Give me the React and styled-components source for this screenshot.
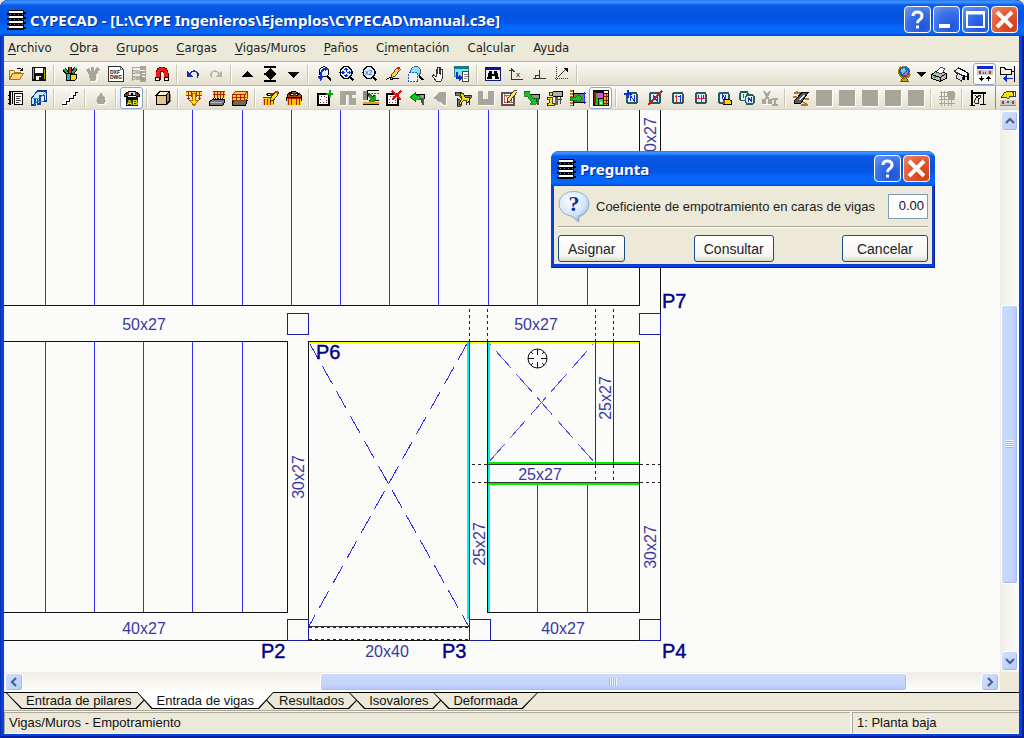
import React, { useState } from "react";
import styled, { createGlobalStyle, css } from "styled-components";

const GlobalStyle = createGlobalStyle`
    *, *::before, *::after { box-sizing: border-box; }
    body {
        margin: 0;
        background: #ece9d8;
        font-family: "Liberation Sans", Arial, sans-serif;
        font-size: 13px;
        color: #111;
    }
    button, input { font-family: inherit; color: inherit; }
`

const Ventana = styled.div`
    min-height: 100vh;
    display: flex;
    flex-direction: column;
    padding: 0 5px 4px 4px;
    background: #0443dc;
    border-radius: 8px 8px 0 0;
    box-shadow: inset 1px 0 #0a2bb8, inset -2px 0 #0a1f9c, inset 0 -2px #0a1f9c;
    overflow: hidden;
`
const barraAzul = css`
    background: linear-gradient(#2a78f0 0, #3f97ff 2px, #0a5cea 5px, #0453e0 14px, #0456e6 60%, #0566fb 74%, #0566fa 92%, #0347c8 100%);
`
const BarraTitulo = styled.header`
    ${barraAzul}
    display: flex;
    align-items: center;
    gap: 4px;
    height: ${p => p.$dialogo ? "35px" : "36px"};
    margin: ${p => p.$dialogo ? "0 -3px" : "0 -5px 0 -4px"};
    padding: ${p => p.$dialogo ? "0 5px 0 5px" : "3px 6px 0 6px"};
    border-radius: 8px 8px 0 0;
`
const Titulo = styled.h1`
    flex: 1;
    margin: 0;
    font: bold 15px/20px "Noto Sans", "Open Sans", sans-serif;
    color: #fff;
    text-shadow: 1px 1px #0a2b9a;
    white-space: nowrap;
`
const BotonesVentana = styled.div`
    display: flex;
    gap: 2px;
`
const BotonVentana = styled.button`
    width: 27px;
    height: 27px;
    padding: 0;
    border: 1px solid #fff;
    border-radius: 4px;
    background: ${p => p.$cerrar
        ? "radial-gradient(circle at 80% 80%, #d43e14, #e4552c 50%, #ee8a68)"
        : "radial-gradient(circle at 70% 80%, #1d55de, #3a6fe8 55%, #6f9bf5)"};
    svg { display: block; }
`

const Menu = styled.nav`
    display: flex;
    height: 25px;
    align-items: center;
    background: #ece9d8;
    padding: 0 0 2px 4px;
    gap: 18px;
`
const MenuItem = styled.a`
    font: 13px/20px "DejaVu Sans Condensed", "DejaVu Sans", sans-serif;
    color: #222;
    text-decoration: none;
    u { text-underline-offset: 2px; }
`

const BarraIconos = styled.div`
    display: flex;
    justify-content: space-between;
    height: 24px;
    border-top: 1px solid #b9b5a4;
    background: linear-gradient(#fbfaf6, #f1efe4 40%, #e4e0d0);
    overflow: hidden;
`
const Grupo = styled.div`
    display: flex;
    align-items: center;
    flex: ${p => p.$fijo ? "none" : "0 1 auto"};
    overflow: hidden;
    border-left: ${p => p.$borde ? "1px solid #8f8c80" : "0"};
`
const Glifo = styled.svg`
    display: block;
    flex: none;
    width: 18px;
    height: 18px;
`
const Herramienta = styled.button`
    display: flex;
    align-items: center;
    justify-content: center;
    flex: none;
    width: ${p => p.$estrecho ? "12px" : "23px"};
    height: 22px;
    padding: 0;
    border: 1px solid ${p => p.$activo ? "#8ea6c4" : "transparent"};
    border-radius: 3px;
    background: ${p => p.$activo ? "#fdfdfb" : "none"};
`
const Separador = styled.span`
    flex: none;
    width: 8px;
    height: 18px;
    background: linear-gradient(90deg, transparent 3px, #c9c5b4 3px, #c9c5b4 4px, #fff 4px, #fff 5px, transparent 5px);
`

const Trabajo = styled.main`
    flex: 1;
    position: relative;
    display: grid;
    grid-template: minmax(0, 1fr) 20px / minmax(0, 1fr) 19px;
    background: #ece9d8;
    border-top: 1px solid #d8d4c4;
`
const Lienzo = styled.svg`
    width: 100%;
    height: 100%;
    min-height: 561px;
    background: #fbfbf9;
    display: block;
    font-family: "Liberation Sans", Arial, sans-serif;
`
const Barra = styled.div`
    display: flex;
    flex-direction: ${p => p.$vertical ? "column" : "row"};
    padding: 1px;
    background: ${p => p.$vertical
        ? "linear-gradient(90deg, #efede6, #fdfdfb)"
        : "linear-gradient(#efede6, #fdfdfb)"};
`
const Flecha = styled.button`
    flex: none;
    display: grid;
    place-items: center;
    width: ${p => p.$vertical ? "auto" : "18px"};
    height: ${p => p.$vertical ? "20px" : "auto"};
    padding: 0;
    border: 1px solid #fff;
    border-radius: 3px;
    background: linear-gradient(135deg, #d3e0fd, #b5cbf8);
    box-shadow: inset -1px -1px #a3b9e6;
`
const Hueco = styled.span`
    flex: ${p => p.$peso} 1 0;
`
const Tirador = styled.button`
    flex: ${p => p.$peso} 1 0;
    display: grid;
    place-items: center;
    padding: 0;
    border: 1px solid #fff;
    border-radius: 3px;
    box-shadow: inset -1px -1px #a5bdee;
    background: ${p => p.$vertical
        ? "linear-gradient(90deg, #cbdafc, #c3d4fb 70%, #b3c8f6)"
        : "linear-gradient(#cbdafc, #c3d4fb 70%, #b3c8f6)"};
`
const Estrias = styled.span`
    width: 8px;
    height: 8px;
    background: repeating-linear-gradient(${p => p.$vertical ? "0deg" : "90deg"}, #a3b9e6 0, #a3b9e6 1px, #eef4fe 1px, #eef4fe 2px);
`

const Pestanas = styled.div`
    display: flex;
    height: 19px;
    padding-left: 2px;
    background: #ece9d8;
    border-top: 1px solid #000;
    border-bottom: 1px solid #aca899;
`
const Pestana = styled.button`
    position: relative;
    z-index: ${p => p.$activa ? 2 : 1};
    height: ${p => p.$activa ? "17px" : "16px"};
    margin: ${p => p.$activa ? "-1px -15px 0 0" : "0 -15px 0 0"};
    padding: ${p => p.$activa ? "1px 20px 0" : "0 20px"};
    border: 0;
    background: none;
    font-size: 13px;
    line-height: 16px;
    white-space: nowrap;

    &::before, &::after {
        content: "";
        position: absolute;
        z-index: -1;
        inset: 0;
        background: #000;
        clip-path: polygon(0 0, 100% 0, calc(100% - 15px) 100%, 15px 100%);
    }
    &::after {
        inset: 0 1px 1px 1px;
        background: ${p => p.$activa ? "#fff" : "#ece9d8"};
    }
`

const Estado = styled.footer`
    display: flex;
    gap: 2px;
    height: 23px;
    padding-top: 1px;
    background: #f6f5ee;
`
const Celda = styled.div`
    flex: ${p => p.$ancho || "1 1 0"};
    padding-left: 4px;
    border-top: 1px solid #aca899;
    border-left: 1px solid #aca899;
    border-bottom: 1px solid #fff;
    background: #ece9d8;
    line-height: 20px;
    white-space: nowrap;
`

const Dialogo = styled.section`
    position: absolute;
    top: 41px;
    right: 84px;
    width: 384px;
    padding: 0 3px 4px;
    border-radius: 8px 8px 0 0;
    background: #0a3fd6;
    box-shadow: inset -1px -1px #0a1f9c;
`
const Cuerpo = styled.form`
    padding: 1px 4px 2px;
    background: #ece9d8;
`
const Campo = styled.div`
    display: flex;
    align-items: center;
    gap: 6px;
    height: 40px;
    border-bottom: 1px solid #aca899;
    box-shadow: 0 1px #fff;
    svg { flex: none; }
`
const Etiqueta = styled.label`
    flex: 1;
    font-size: 13px;
    line-height: 20px;
    white-space: nowrap;
    color: #222;
`
const Valor = styled.input`
    flex: none;
    width: 40px;
    height: 25px;
    padding: 0 3px 2px;
    border: 1px solid #7f9db9;
    background: #fff;
    font-size: 13px;
    text-align: right;
`
const Botonera = styled.div`
    display: flex;
    justify-content: space-between;
    padding-top: 8px;
`
const Boton = styled.button`
    height: 27px;
    padding: 0 ${p => p.$ancho ? "14px" : "9px"};
    border: 1px solid #1c4f80;
    border-radius: 3px;
    background: linear-gradient(#fff, #f6f5f0 80%, #dcd8ca);
    font-size: 14px;
    color: #222;
`

const G = "#a9a598";
const N = "#000";

// each part: f = fill, s = stroke, w = stroke width, d = path, t = small caption
const rotulo = [
    { f: "#dfeeee", s: "#2a5a5e", w: 2, d: "M4 3h8l1 2v7l-1 1H4l-1-1V4z" },
];
const ojos = [
    { f: "#fff", s: N, d: "M3.5 4.500q4.500-3 9 0q-4.500 3-9 0" },
    { f: "#7a3200", d: "M7 3h3v3H7z" },
];
const lupa = [
    { s: N, w: 2, d: "M10.500 10.500l4 4" },
    { f: "#dff4ff", s: N, w: 1.2, d: "M7 .5a6 6 0 1 0 .1 0z" },
];
const bloque = [{ f: G, d: "M0 0h16v16H0z" }, { s: "#fff", d: "M0 16.500h16.500V0" }];

const ICONOS = {
    abrir: [
        { f: "#ffe9a8", s: "#a8741c", d: "M1.500 13.500v-9h4l1.500 2h5v2" },
        { f: "#f8d27c", s: "#a8741c", d: "M1.500 13.500l3-6h11l-4 6z" },
        { s: N, d: "M9 3q3-2 4.500 1M11.500 4.500h3V1.500" },
    ],
    guardar: [
        { f: "#111", d: "M1 1h14v14H1z" },
        { f: "#fff", d: "M4 2h8v5H4zM5 10h5v4H5z" },
        { f: "#a8a800", d: "M2 2h1v11H2zM13 3h1v10h-1z" },
        { f: "#111", d: "M8 11h2v3H8z" },
    ],
    lapices: [
        { s: N, w: 4, d: "M2 3l5 6M7.500 8V1M9 9l5-7" },
        { s: "#e42222", w: 2, d: "M7.500 8V1" }, { s: "#20b040", w: 2, d: "M2 3l5 6M10 8l4-6" },
        { f: "#18b8d8", s: N, d: "M4.500 7.500h6v7h-6z" }, { f: "#ffd800", s: N, d: "M8.500 8.500h6v4l-2 2h-4z" },
    ],
    lapicesG: [{ f: G, d: "M1 3l3-1 2 4V1h3v5l3-5 3 2-4 6v5l-2 1H5l-1-6z" }, { s: "#fff", d: "M6 15.500h5l1-2V9" }],
    dxf: [
        { f: "#fff", s: "#333", d: "M.5 .5h12l3 3v12H.5z" }, { s: "#777", d: "M12.500 .5v3h3" },
        { t: "DXF", x: 2, y: 8, z: 5, b: 1 }, { t: "DWG", x: 2, y: 13, z: 5, b: 1 },
    ],
    dxfG: [
        { f: G, d: "M9 0h6v16H9z" }, { s: G, d: "M1.500 15V1.500h8" },
        { t: "DXF", x: 1, y: 8, z: 5, c: "#8f8c80", b: 1 }, { t: "DWG", x: 1, y: 14, z: 5, c: "#8f8c80", b: 1 },
        { s: "#fff", d: "M9 4.500h5M11 7.500h3M11 10.500h3" },
    ],
    iman: [
        { s: "#5a0000", w: 5, d: "M4 14V7a4 4 0 0 1 8 0v7" }, { s: "#f01818", w: 3.400, d: "M4 12V7a4 4 0 0 1 8 0v5" },
        { f: "#e8e8e8", s: N, d: "M1.500 11.500h4v3h-4zM10.500 11.500h4v3h-4z" },
    ],
    deshacer: [{ s: "#1b2ea8", w: 1.400, d: "M5 7.500q3-4 7-1.500q2.500 2.500 0 5.500" }, { f: "#1b2ea8", d: "M2 4.500v6h6z" }],
    rehacer: [{ s: "#b9b5a8", w: 1.400, d: "M11 7.500q-3-4-7-1.500q-2.500 2.500 0 5.500" }, { f: "#b9b5a8", d: "M14 4.500v6H8z" }],
    subir: [{ f: N, d: "M2 11h12L8 5z" }],
    subirBajar: [{ f: N, d: "M2 0h12v2H2zM2 7h12v2H2zM2 14h12v2H2zM3 7h10L8 2zM3 9h10L8 14z" }],
    bajar: [{ f: N, d: "M2 6h12L8 12z" }],
    zoomPrevio: [
        { s: N, w: 2, d: "M10.500 9.500l4.500 5" }, { f: "#dff4ff", s: N, d: "M8 .8a5 5 0 1 0 .1 0z" },
        { s: "#0b2fe0", w: 2, d: "M11 3Q5 2 4.500 11" }, { f: "#0b2fe0", d: "M1 9.500h7.500L4.500 15zM8.500 1l4 2-4 3z" },
    ],
    zoomTodo: [
        ...lupa, { s: "#0b2fe0", d: "M7 2v9M2.500 6.500h9" },
        { f: "#0b2fe0", d: "M5 4l2-2.500L9 4zM5 9l2 2.500L9 9zM4.500 4.500v4l-2.500-2zM9.500 4.500v4l2.500-2z" }, { f: "#fff", d: "M6 5.500h2v2H6z" },
    ],
    zoomDoble: [...lupa, { t: "x2", x: 3, y: 9, z: 7, c: "#0b2fe0" }],
    redibujar: [
        { s: N, d: "M1 13.500l4-2 1 2 3-1h5" }, { f: "#ffd34a", s: N, w: .7, d: "M12.500 1l2.500 1.500-6 8-3 1.500 .5-3z" },
        { f: "#d42222", d: "M12.500 1l2.500 1.500-1 1.500-2.500-1.500z" },
    ],
    zoomVentana: [
        { s: N, w: 2, d: "M11 9.500l4 4.500" }, { f: "#8fe6ee", s: "#456", d: "M7.500 .5a5 5 0 1 0 .1 0z" },
        { f: "#eef5ff", s: "#1f50ff", dash: "2 1", d: "M.5 6.500h9v9h-9z" },
    ],
    mano: [{ f: "#fff", s: "#333", d: "M5 15l-3.500-5 1-1.200L5 10.500V3.500q.8-1 1.500 0V8 2q.8-1 1.600 0v6-6q.8-1 1.700 0v6.500V4q.9-1 1.700 0v6.500q0 3-1.500 4.500z" }],
    copiarVista: [
        { f: "#7fe4ee", s: "#36888e", d: "M.5 .5h14v10H.5z" }, { f: "#187b86", d: "M0 0h15v3H0z" },
        { f: "#fff", s: "#444", d: "M8.500 5.500h6v10h-6z" }, { s: "#888", d: "M10 8.500h4M10 10.500h4M10 12.500h3" },
        { s: "#0b2fe0", w: 2, d: "M3 6v6h3" }, { f: "#0b2fe0", d: "M5 9v6l3.500-3z" },
    ],
    buscar: [
        { f: "#f2f2f2", s: "#0a1a70", d: "M.5 1.500h15v13H.5z" }, { f: "#0a1a8c", d: "M0 1h16v3H0z" },
        { f: N, d: "M4 5h3v3h2V5h3l2 8H9.500v-3h-3v3H2z" },
    ],
    coordenadas: [{ s: "#333", d: "M3.500 2v11.500H15M1 4.500h5" }, { s: "#333", d: "M3.500 3l3 3" }, { t: "x", x: 8, y: 11, z: 8 }],
    orto: [{ s: "#333", d: "M2 12.500h13M8.500 12V4" }, { s: "#333", d: "M4.500 12V9.500h4" }],
    angulo: [{ s: "#333", dash: "1 1", d: "M2.500 1v13M1 12.500h14" }, { s: "#333", d: "M4 11l9-9" }, { f: N, d: "M9.500 2h4.500v4.500z" }],
    globo: [
        { f: "#c9a400", s: "#6a5200", d: "M6.500 12.500h4l2 3h-8z" }, { s: "#a88200", w: 2, d: "M5 1q-5 5 1 10q6 2 8-3" },
        { f: "#1f64d8", s: "#222", w: .6, d: "M8.500 .5a5 5 0 1 0 .1 0z" }, { f: "#62d8d0", d: "M5 3l4-1 1 3-4 3z" }, { f: "#d458c8", d: "M9 6l3-1-1 4-3 .5z" },
    ],
    imprimir: [
        { f: "#b8b8b0", s: N, d: "M.5 8.500l6-4 9 3v4.500l-6 3.500-9-3z" }, { f: "#fff", s: N, w: .7, d: "M5 6l5-5 4 2-3.500 5z" },
        { s: N, d: "M1 8.500l8 3 6-4M9.500 11.500V15" }, { f: "#20b040", d: "M3 10h2v2H3z" }, { f: "#e8e000", d: "M11 11h2v1h-2z" },
    ],
    plotter: [
        { f: "#fff", s: "#333", d: "M.5 5l4-3 10 5.500-1 3.500-9-2z" }, { f: "#ddd", s: "#333", d: "M3.500 7l6 3-2 5-5-3z" },
        { s: N, w: 2, d: "M10 9v5M14 8v6" }, { s: N, d: "M5 2l10 5.500" },
    ],
    ventanas: [
        { f: "#1424d8", d: "M0 0h16v3H0z" }, { f: "#c9c9c9", d: "M0 4h16v5H0z" }, { f: "#d42222", d: "M2 5h2v3H2zM12 5h2v3h-2z" },
        { f: "#147a86", d: "M6 6h1v2H6zM8 6h1v2H8z" }, { s: N, d: "M4.500 10v5M11.500 15v-5" }, { f: N, d: "M2 12h5l-2.500 3.500zM9 13h5l-2.500-3.500z" },
    ],
    carpeta: [
        { f: "#f6f4ea", s: N, d: "M.5 8.500v-7h4l1 2h6v5z" }, { s: N, d: "M12 5.500h3M14.500 0v16" },
        { s: "#0b2fe0", w: 1.300, d: "M5 12.500h8" }, { f: "#0b2fe0", d: "M7 9v7l-4-3.500z" },
    ],
    planilla: [
        { f: "#fff", s: N, d: "M6.500 3.500h8v11h-8z" }, { s: "#444", d: "M8 6.500h5M8 8.500h4M8 10.500h5M8 12.500h3" },
        { s: N, d: "M1.500 1v14M2.500 1v14M4.500 1v13M1 1.500h14M0 5.500h3M0 9.500h3M0 13.500h3" },
    ],
    portico: [
        { f: "#d6e8ff", s: "#0a3c9c", w: 1.200, d: "M.5 15V8l6-7h9v10h-2V5.500H9V14H6.500V8.500H4V15z" }, { s: "#2a8ad8", d: "M2 8h7l6-6M4 11h9M3 15l5-5" },
    ],
    escalera: [{ s: "#fff", w: 4, d: "M1 13.500h4v-3h3v-3h3v-3h4" }, { s: N, d: "M0 14.500h4v-3h3.500v-3H11v-3h2.500V2.500h2.500" }],
    gota: [{ f: G, d: "M8 2q-1 3-3.500 5Q2 11 5 14h6q3-3 .5-7Q9 5 8 2z" }, { s: "#fff", d: "M5 14.500h6.500q3-3 1-6" }],
    vistaAB: [
        { f: "#111", d: "M2 7h12v9H2z" }, { f: "#6e4222", s: N, d: "M.5 4.500Q8-2.500 15.500 4.500v2h-3L11 5H5L3.500 6.500H.5z" }, { f: "#cde", d: "M5 2h6v3H5z" }, { f: N, d: "M7 3h2v2H7z" },
        { t: "AB", x: 2.500, y: 15, z: 8, c: "#f4e800", b: 1 },
    ],
    cubo: [
        { f: "#8a8678", d: "M12 15l4-4V5l-2-2z" }, { f: "#fff4cc", s: N, d: "M1.500 5l3.500-3.500h9.500L11 5z" },
        { f: "#e3c78c", s: N, d: "M1.500 5H11v9.500H1.500z" }, { f: "#a48450", s: N, d: "M11 5l3.500-3.500V11L11 14.500z" },
    ],
    cargaAbajo: [
        { f: "#ffd21e", d: "M0 1h16v5H0z" }, { s: "#b02a00", d: "M0 1.500h16M0 5.500h16M2.500 2v7M13.500 2v7M5.500 2v5M10.500 2v5" },
        { f: "#ffe400", s: "#b06a00", d: "M6.500 3.500h3v7h3L8 15.500 3.500 10.500h3z" }, { f: "#b02a00", d: "M1 8h3l-1.500 2zM12 8h3l-1.500 2z" },
    ],
    cargaLosa: [
        { f: "#777", s: N, d: "M.5 11.500l3-2h12v3l-2 3H.5z" }, { s: "#bbb", d: "M2 12.500h11" },
        { f: "#ffd21e", d: "M4 1h12v7H4z" }, { s: "#b81c00", d: "M4 1.500h12M4 4.500h12M5.500 2v6M8.500 2v6M11.500 2v6M14.500 2v6" }, { s: N, d: "M4 8.500l1.500 1 1-1M8 8.500l1 1 1-1M11 8.500l1.500 1 1-1" },
    ],
    cargaBloque: [
        { f: "#6a6a5a", s: N, d: "M.5 12l2-2h13l-2 5H.5z" }, { f: "#ffd21e", s: "#9c3a00", d: "M.5 4.500l3-3h12v7l-2 2H.5z" },
        { s: "#b81c00", d: "M1 4.500h12l2-3M4.500 4v6M8.500 4v6M12.500 4v6M1 7.500h13" },
    ],
    editarCarga: [
        ...ojos, { f: "#ffc400", d: "M0 7h11v8H0z" }, { s: "#b81c00", d: "M0 7.500h11M1.500 9v6M4.500 9v6M7.500 9v6M10.500 9v5" },
        { f: "#ffe400", s: N, w: .7, d: "M13 1l2.500 1.500-6 8-2.500 1 .5-3z" }, { f: "#e02020", d: "M13 1l2.500 1.500-1 1.300-2.400-1.500z" },
    ],
    verCarga: [
        { f: "#b04a10", s: N, d: "M1 5q7-7 14 0v2H1z" }, ...ojos, { f: "#ffc400", d: "M1 8h14v7H1z" },
        { s: "#b81c00", d: "M1 8.500h14M2.500 9v6M5.500 9v6M10.500 9v6M13.500 9v6" }, { s: N, d: "M.5 7v4M15.500 7v4" },
    ],
    panoNuevo: [
        { f: "#fff", s: N, w: 2, d: "M1 4h11v11H1z" }, { s: "#a02020", dash: "1 2", d: "M3.500 6.500h6v6h-6z" },
        { s: "#0aa418", w: 2, d: "M13 0v7M9 3.500h7" },
    ],
    muroG: [{ f: G, d: "M0 1h16v4h-4v3h4v7H9V5H6v10H0z" }, { s: "#fff", d: "M1 15.500h5.500V6M9 15.500h7" }],
    terreno: [
        { f: "#8a8a80", d: "M0 1h4v9H0z" }, { s: N, d: "M4.500 1v9M4 .5h12M6 10.500h10" }, { s: "#e42222", dash: "2 1", d: "M5 3.500h11" },
        { f: "#0aa418", s: N, w: .5, d: "M4 4h3l3 3V5h2v6H6l2-2z" }, { f: "#e8a010", d: "M0 12h16v2H0z" }, { s: N, d: "M0 14.500h16" },
    ],
    borrarPano: [
        { f: "#fff", s: N, w: 2, d: "M1 4h11v11H1z" }, { s: "#a02020", dash: "1 2", d: "M3.500 6.500h6v6h-6z" },
        { s: "#e01414", w: 2.600, d: "M6 1l9 9M15 1l-9 9" },
    ],
    vigaVerde: [
        { f: "#9a9a90", s: N, d: "M7.500 4.500h8v4h-8z" }, { f: "#55554e", d: "M11 8h4v7h-2z" },
        { f: "#10c424", s: "#066010", w: .7, d: "M.5 7l6-5v3h4l2 6-3-2h-3v3z" },
    ],
    vigaG: [{ f: G, d: "M1 8l7-6h6v13h-3L8 12z" }, { s: "#fff", d: "M8 12.500l3 3h3.500V2" }],
    ajustar: [
        { f: "#77776d", s: N, w: .7, d: "M0 2h6l3 3h7v3H6l-3-3H0zM2 8l4 3v5H2z" }, { s: "#333", d: "M11.500 8v7M14.500 8v7" },
        { f: "#f4e000", s: N, w: .7, d: "M5 3h3l2 4 5 1-2 5-2-3-3 1-3 4-1-2 3-4z" },
    ],
    uniG: [{ f: G, d: "M0 1h5v8h5V1h6v14H0z" }, { s: "#fff", d: "M5.500 1v8M1 15.500h15V1" }],
    editarPano: [
        { f: "#fff", s: "#555", w: 2, d: "M1 3h12v12H1z" }, { s: "#b85a5a", d: "M2 3l11 11M3.500 5.500h7v7h-7z" },
        { f: "#ffe26a", s: N, w: .7, d: "M13.500 0l2.500 2-7 9-3 1.500 .5-3.500z" },
    ],
    desplazar: [
        { f: "#9a9a90", s: N, d: "M6.500 4.500h9v4h-9z" }, { f: "#55554e", d: "M12 8h3v7h-2z" },
        { f: "#10c424", s: "#066010", w: .7, d: "M0 1h6L5 3l5 6 2-1v6H6l1.500-2L3 6 1 7z" },
    ],
    info: [
        { f: "#b0b0a6", s: N, d: "M4.500 3.500l2-2h9v5h-9z" }, { f: "#66665e", d: "M8 7h3v8H8z" }, { s: "#444", d: "M11 9.500h4M13.500 7v7" },
        { f: "#f4e000", s: N, w: .7, d: "M2 2h3v3H2zM0 7h5v6h2v2.500H0V13h2V9H0z" },
    ],
    apoyo: [
        { s: "#b8761c", w: 3, dash: "2 1", d: "M1.500 0v16" }, { s: N, d: "M3.500 0v16" }, { f: "#77776d", d: "M4 4h10v8H4z" }, { s: N, d: "M4 3.500h12M4 12.500h12" },
        { f: "#10c424", s: "#066010", w: .7, d: "M0 7h6a3 3 0 1 1 0 3H0z" }, { s: "#1a3cff", d: "M14.500 2v12" },
    ],
    empotrar: [
        { f: "#111", d: "M0 0h16v16H0z" }, { f: "#10c424", d: "M2 3h3v12H2z" }, { f: "#8a1c1c", d: "M1 2h2v11H1z" }, { f: "#f040f0", d: "M5 3h5v5H5z" },
        { f: "#20e834", d: "M6 9h4v6H6z" }, { f: "#fff", d: "M7 12h2v2H7zM11 1h4v2h-4z" },
        { f: "#f4b020", d: "M11 4h4v11h-4z" }, { s: "#7a2a00", d: "M13.500 4v11M11 6.500h4M11 10.500h4M11 13.500h4" },
    ],
    armadoMas: [...rotulo, { s: "#1a2fd8", d: "M6.500 11V6l4 5V5" }, { s: "#0b2fe0", w: 2, d: "M4 0v8M0 4h8" }],
    armadoQuitar: [...rotulo, { s: "#1a2fd8", d: "M6 11V5l4 6V5" }, { s: "#e01414", w: 2.400, d: "M1 15L15 1" }],
    armado11: [...rotulo, { s: "#e42222", d: "M4.500 6.500h2M6.500 5v7" }, { s: "#1a2fd8", d: "M8 6.500h2M10.500 5v7" }],
    armadoCentro: [...rotulo, { s: "#e42222", d: "M3 8.500h10M8.500 5v7" }, { s: "#1a2fd8", d: "M5.500 5v3M10.500 5v3" }],
    armadoGoma: [...rotulo, { s: "#1a2fd8", d: "M6.500 9V5l3 4V5" }, { f: "#f4e000", s: N, d: "M7.500 9.500h6l2 1.500v3.500h-8z" }, { f: "#e02020", d: "M7 10h2v4H7z" }],
    armadoDoble: [
        { f: "#dfeeee", s: "#2a5a5e", w: 1.600, d: "M2 2h6l1.500 2v5L8 10.500H2L1 9V3.500z" }, { s: "#d42222", d: "M4.500 4v4" },
        { f: "#dfeeee", s: "#2a5a5e", w: 1.600, d: "M8 5h5.500L15 7v5l-1.500 2H8l-1.500-2V7z" }, { s: "#1a2fd8", d: "M9.500 12V7.500l3 4V7" },
    ],
    tijeraG: [{ s: G, w: 2, d: "M2 1l5 9M8 1L3 10M10 9h6M13 8v7M10 15h6" }, { f: G, d: "M0 9h4v5H0zM6 9h4v5H6z" }, { s: "#fff", d: "M1 14.800h9" }],
    rampa: [
        { s: "#b8761c", w: 1.300, d: "M1 3h9M3 1l6 5M0 7h4M8 15h7M10 12l5 3M12 9h4" }, { f: "#5c5c58", s: N, d: "M1 11L9 2.500h6L8 13H1z" }, { f: "#cfe8f4", d: "M5 10l5-5h2l-4 5z" },
    ],
    bloque,
    malla: [{ s: G, d: "M1 2.500h9M0 6.500h16M0 9.500h16M0 13.500h16M2.500 1v15M5.500 1v15M9.500 1v15M12.500 4v12" }, { f: G, d: "M10 1h4l2 2v4l-2 2h-4L8 7V3z" }],
    cotas: [
        { s: N, w: 2, d: "M2 0v16M1 3h15" }, { s: N, d: "M13.500 3v12M0 15.500h5" }, { f: "#ddd", s: "#222", d: "M5 13q-1-5 5-8l1 2q-3 2-3 6z" }, { s: N, d: "M10 14.500h6M5 5l4 4" },
    ],
    corte: [{ s: N, w: 2, d: "M9 1v14" }],
    configurar: [
        { f: "#f4e000", s: N, w: .7, d: "M1 8l3-5 4-2h4l1 2v4l-3-1-1 2H7L6 7z" }, { f: "#fff", s: "#1a2fd8", d: "M13.500 1.500h2v5h-2z" },
        { f: "#c9c9c9", d: "M0 10h16v5H0z" }, { f: "#d42222", d: "M2 11h2v3H2zM12 11h2v3h-2z" }, { f: "#147a86", d: "M7 11h2v2H7z" }, { s: "#888", d: "M0 15.500h16" },
    ],
    flechita: [{ f: N, d: "M3 6h10l-5 5z" }],
};

const FILA1 = ["abrir", "guardar", "|", "lapices", "lapicesG", "dxf", "dxfG", "iman", "|", "deshacer", "rehacer", "|",
    "subir", "subirBajar", "bajar", "|", "zoomPrevio", "zoomTodo", "zoomDoble", "redibujar", "zoomVentana", "mano", "copiarVista", "|",
    "buscar", "coordenadas", "orto", "angulo", "|"];
const FILA1_DERECHA = ["globo", "flechita", "imprimir", "plotter", "ventanas", "carpeta"];
const FILA2 = ["planilla", "portico", "|", "escalera", "|", "gota", "|", "vistaAB", "|", "cubo", "|",
    "cargaAbajo", "cargaLosa", "cargaBloque", "|", "editarCarga", "verCarga", "|",
    "panoNuevo", "muroG", "terreno", "borrarPano", "vigaVerde", "vigaG", "ajustar", "uniG", "editarPano", "desplazar", "info", "apoyo", "empotrar", "|",
    "armadoMas", "armadoQuitar", "armado11", "armadoCentro", "armadoGoma", "armadoDoble", "tijeraG", "|",
    "rampa", "bloque", "bloque", "bloque", "bloque", "bloque", "|", "malla", "|", "cotas", "corte"];
const ACTIVOS = ["vistaAB", "empotrar", "ventanas"];

const MENU = [["", "A", "rchivo"], ["", "O", "bra"], ["", "G", "rupos"], ["", "C", "argas"], ["", "V", "igas/Muros"],
    ["", "P", "años"], ["C", "i", "mentación"], ["Ca", "l", "cular"], ["Ay", "u", "da"]];
const PESTANAS = ["Entrada de pilares", "Entrada de vigas", "Resultados", "Isovalores", "Deformada"];

const Icono = ({ nombre }) => (
    <Glifo viewBox="-1 -1 18 18" shapeRendering="crispEdges" aria-hidden="true">
        {ICONOS[nombre].map((p, i) => p.t
            ? <text key={i} x={p.x} y={p.y} fontSize={p.z} fill={p.c || "#111"} fontWeight={p.b ? "bold" : "normal"}>{p.t}</text>
            : <path key={i} d={p.d} fill={p.f || "none"} stroke={p.s || "none"} strokeWidth={p.w || 1} strokeDasharray={p.dash} />
        )}
    </Glifo>
)

const Herramientas = ({ lista }) => lista.map((nombre, i) => nombre === "|"
    ? <Separador key={i} />
    : (
        <Herramienta key={i} type="button" aria-label={nombre} $activo={ACTIVOS.includes(nombre)} $estrecho={nombre === "flechita" || nombre === "corte"}>
            <Icono nombre={nombre} />
        </Herramienta>
    )
)

const Logo = () => (
    <svg width="20" height="20" viewBox="0 0 20 20" shapeRendering="crispEdges" aria-hidden="true">
        <path d="M3 0h15v20H3z" fill="#000" />
        <path d="M1 4h3M1 9h3M1 14h3M1 19h3M17 3h3M17 8h3M17 13h3M17 18h3" stroke="#000" strokeWidth="2" />
        <path d="M3 2h14M3 7h14M3 12h14M3 17h14" stroke="#fff" strokeWidth="2" />
        <path d="M4 4.500h13M4 9.500h13M4 14.500h13" stroke="#777" strokeDasharray="1 3" />
    </svg>
)

const TRAZOS = {
    ayuda: <path d="M8 9q0-4 4.500-4T17 9q0 2.500-3 4.200-1.500 1-1.500 3M12.500 18.500v3" fill="none" stroke="#fff" strokeWidth="3" />,
    minimizar: <path d="M5 17h11v4H5z" fill="#fff" />,
    maximizar: <path d="M4 5h17v15H4zM4 6.500h17" fill="none" stroke="#fff" strokeWidth="2" />,
    cerrar: <path d="M5 5l15 15M20 5L5 20" stroke="#fff" strokeWidth="4" />,
}

const BotonBarra = ({ tipo }) => (
    <BotonVentana type="button" aria-label={tipo} $cerrar={tipo === "cerrar"}>
        <svg width="25" height="25" viewBox="0 0 25 25">{TRAZOS[tipo]}</svg>
    </BotonVentana>
)

const PUNTAS = { arriba: "M1 7l4-4 4 4", abajo: "M1 3l4 4 4-4", izq: "M7 1L3 5l4 4", der: "M3 1l4 4-4 4" }

const BotonFlecha = ({ hacia, vertical }) => (
    <Flecha type="button" aria-label={hacia} $vertical={vertical}>
        <svg width="10" height="10" viewBox="0 0 10 10"><path d={PUNTAS[hacia]} fill="none" stroke="#4d6185" strokeWidth="2.200" /></svg>
    </Flecha>
)

const VIGUETAS = [45, 94, 143, 192, 242, 291, 340, 389, 438, 488, 537, 587];
const PILARES = [[287, 313], [639, 313], [287, 619], [469, 619], [639, 619]];
const COTAS = [[144, 324, "50x27"], [536, 324, "50x27"], [144, 628, "40x27"], [563, 628, "40x27"], [387, 651, "20x40"], [540, 474, "25x27"],
    [298, 477, "30x27", 1], [605, 398, "25x27", 1], [479, 544, "25x27", 1], [650, 547, "30x27", 1], [650, 139, "30x27", 1]];
const NOMBRES = [[316, 359, "P6"], [662, 308, "P7"], [261, 658, "P2"], [442, 658, "P3"], [662, 658, "P4"]];

const Planta = () => (
    <Lienzo role="img" aria-label="Planta baja">
        <g transform="translate(-4 -110)" fill="none" strokeWidth="1" shapeRendering="crispEdges">
            <g stroke="#3030f4">
                {VIGUETAS.map(x => <path key={x} d={`M${x}.5 100V305`} />)}
                {VIGUETAS.slice(0, 5).map(x => <path key={x} d={`M${x}.5 341V612`} />)}
                <path d="M537.5 484V612M587.5 484V612" />
            </g>
            <path stroke="#2a2af0" strokeDasharray="20 8.500" d="M308.5 341.5L469 627M468 342L308.500 627" />
            <path stroke="#5050f0" strokeDasharray="23 8" strokeDashoffset="19" d="M488 342L595 463M595 342L488 463" />

            <path stroke="#ffff00" strokeWidth="2" d="M309 343H640" />
            <path stroke="#00f0f0" strokeWidth="2" d="M468 342V619M489 342V612" />
            <path stroke="#00f000" strokeWidth="2" d="M488 463H640M488 484H640" />

            <path stroke="#111" d="M4 305.500H639.500V100M660.500 100V640.500H4M4 341.500H287.500V612.500H4M308.500 627V341.500H640M639.500 341V612.500H487.500V341" />
            <path stroke="#333" d="M469.500 341V619M595.500 341V464M613.500 341V464M487 464.500H640M487 482.500H640M308 626.500H469" />
            <path stroke="#222" strokeDasharray="3 3" d="M469.500 309V341M487.500 309V341M595.500 309V341M613.500 309V341M595.500 465V482M613.500 465V482M472 464.500H487M472 482.500H487M640 464.500H660M640 482.500H660M309 627.500H469M309 639.500H480" />

            <g stroke="#1a1aa6" fill="#fbfbf9">
                {PILARES.map(([x, y]) => <rect key={`${x}-${y}`} x={x + 0.5} y={y + 0.5} width="21" height="21" />)}
            </g>

            <g stroke="#111">
                <circle cx="537.5" cy="358.5" r="9.500" shapeRendering="auto" />
                <path d="M537.5 349v6M537.5 362v6M528 358.500h6M541 358.500h6M531 352l2 2M544 352l-2 2M531 365l2-2M544 365l-2-2" />
            </g>

            <g fill="#3838a4" fontSize="16" textAnchor="middle">
                {COTAS.map(([x, y, texto, girado]) => (
                    <text key={`${x}-${y}`} x={x} y={y + 6} transform={girado ? `rotate(-90 ${x} ${y})` : undefined}>{texto}</text>
                ))}
            </g>
            <g fill="#00008a" stroke="#00008a" strokeWidth=".4" fontSize="20">
                {NOMBRES.map(([x, y, texto]) => <text key={texto} x={x} y={y}>{texto}</text>)}
            </g>
        </g>
    </Lienzo>
)

const Pregunta = () => {
    const [valor, setValor] = useState("0.00");

    return (
        <Dialogo role="dialog" aria-labelledby="pregunta">
            <BarraTitulo $dialogo>
                <Logo />
                <Titulo as="h2" id="pregunta">Pregunta</Titulo>
                <BotonesVentana>
                    <BotonBarra tipo="ayuda" />
                    <BotonBarra tipo="cerrar" />
                </BotonesVentana>
            </BarraTitulo>
            <Cuerpo onSubmit={e => e.preventDefault()}>
                <Campo>
                    <svg width="32" height="34" viewBox="0 0 32 34" aria-hidden="true">
                        <defs>
                            <radialGradient id="burbuja" cx=".4" cy=".3" r=".8">
                                <stop offset="0" stopColor="#fff" />
                                <stop offset=".6" stopColor="#d3e6fa" />
                                <stop offset="1" stopColor="#7fa9d8" />
                            </radialGradient>
                        </defs>
                        <path d="M17 3a14.500 12.500 0 0 1 5 24l-1 6-7-6A14 12.500 0 0 1 17 3z" fill="#8d8b80" opacity=".5" />
                        <path d="M16 1.500a14.500 12.500 0 0 1 4.500 24.500v5.500l-7-5.500A14 12.300 0 0 1 16 1.500z" fill="url(#burbuja)" stroke="#8fb0d6" />
                        <text x="16" y="21" fontSize="22" fontWeight="bold" fill="#0b2f9c" textAnchor="middle" fontFamily="Liberation Serif, serif">?</text>
                    </svg>
                    <Etiqueta htmlFor="coeficiente">Coeficiente de empotramiento en caras de vigas</Etiqueta>
                    <Valor id="coeficiente" value={valor} onChange={e => setValor(e.target.value)} />
                </Campo>
                <Botonera>
                    <Boton>Asignar</Boton>
                    <Boton type="button">Consultar</Boton>
                    <Boton type="button" $ancho>Cancelar</Boton>
                </Botonera>
            </Cuerpo>
        </Dialogo>
    )
}

export default () => {
    const [pestana, setPestana] = useState("Entrada de vigas");

    return (
        <>
            <GlobalStyle />
            <Ventana>
                <BarraTitulo>
                    <Logo />
                    <Titulo>CYPECAD - [L:\CYPE Ingenieros\Ejemplos\CYPECAD\manual.c3e]</Titulo>
                    <BotonesVentana>
                        <BotonBarra tipo="ayuda" />
                        <BotonBarra tipo="minimizar" />
                        <BotonBarra tipo="maximizar" />
                        <BotonBarra tipo="cerrar" />
                    </BotonesVentana>
                </BarraTitulo>
                <Menu>
                    {MENU.map(([antes, letra, resto]) => (
                        <MenuItem key={resto} href="#">{antes}<u>{letra}</u>{resto}</MenuItem>
                    ))}
                </Menu>
                <BarraIconos>
                    <Grupo><Herramientas lista={FILA1} /></Grupo>
                    <Grupo $fijo><Herramientas lista={FILA1_DERECHA} /></Grupo>
                </BarraIconos>
                <BarraIconos>
                    <Grupo><Herramientas lista={FILA2} /></Grupo>
                    <Grupo $fijo $borde><Herramientas lista={["configurar"]} /></Grupo>
                </BarraIconos>
                <Trabajo>
                    <Planta />
                    <Barra $vertical>
                        <BotonFlecha hacia="arriba" vertical />
                        <Hueco $peso={174} />
                        <Tirador type="button" aria-label="Desplazar vertical" $peso={278} $vertical><Estrias $vertical /></Tirador>
                        <Hueco $peso={67} />
                        <BotonFlecha hacia="abajo" vertical />
                    </Barra>
                    <Barra>
                        <BotonFlecha hacia="izq" />
                        <Hueco $peso={297} />
                        <Tirador type="button" aria-label="Desplazar horizontal" $peso={586}><Estrias /></Tirador>
                        <Hueco $peso={74} />
                        <BotonFlecha hacia="der" />
                    </Barra>
                    <Pregunta />
                </Trabajo>
                <Pestanas>
                    {PESTANAS.map(nombre => (
                        <Pestana key={nombre} type="button" $activa={nombre === pestana} onClick={() => setPestana(nombre)}>{nombre}</Pestana>
                    ))}
                </Pestanas>
                <Estado>
                    <Celda>Vigas/Muros - Empotramiento</Celda>
                    <Celda $ancho="0 0 167px">1: Planta baja</Celda>
                </Estado>
            </Ventana>
        </>
    );
};
